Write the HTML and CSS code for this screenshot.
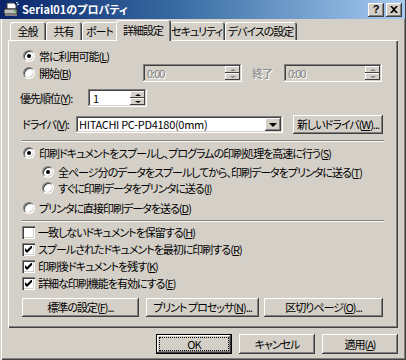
FILE: index.html
```html
<!DOCTYPE html>
<html lang="ja">
<head>
  <meta charset="UTF-8" />
  <title>Serial01のプロパティ</title>
  <link rel="stylesheet" href="styles.css">
</head>
<body>

<div class="window">
  <div class="titlebar">
    <svg class="title-icon" width="16" height="16" viewBox="0 0 16 16">
      <path d="M4 1h7l2 2v4H4z" fill="#fff" stroke="#404040" stroke-width="1"/>
      <path d="M1 7h13v5H1z" fill="#c0c0c0" stroke="#202020" stroke-width="1"/>
      <path d="M2 12h12v2H2z" fill="#808080"/>
      <path d="M11 9h2" stroke="#00a000" stroke-width="1"/>
      <path d="M13 1l2-1M14 3l2-1" stroke="#fff" stroke-width="1"/>
    </svg>
    <span class="title-text">Serial01のプロパティ</span>
    <div class="title-buttons">
      <span class="tbtn help">?</span>
      <span class="tbtn">
        <svg width="8" height="7" viewBox="0 0 8 7"><path d="M0 0h2l2 2 2-2h2L5 3.5 8 7H6L4 5 2 7H0l3-3.5z" fill="#000"/></svg>
      </span>
    </div>
  </div>

  <div class="content">
    <div class="tabs">
      <div class="tab t-general">全般</div>
      <div class="tab t-share">共有</div>
      <div class="tab t-port">ポート</div>
      <div class="tab t-adv selected">詳細設定</div>
      <div class="tab t-sec">セキュリティ</div>
      <div class="tab t-dev">デバイスの設定</div>
    </div>

    <div class="panel">
      <div class="row opt first">
        <span class="radio checked"></span><span>常に利用可能(<u>L</u>)</span>
      </div>

      <div class="row time-row">
        <div class="opt time-opt">
          <span class="radio"></span><span>開始(<u>B</u>)</span>
        </div>
        <div class="field spin disabled t-from">
          <span class="val">0:00</span>
          <span class="spinbtns"><span class="sbtn"><i class="up"></i></span><span class="sbtn"><i class="down"></i></span></span>
        </div>
        <span class="end-label disabled-text">終了</span>
        <div class="field spin disabled t-to">
          <span class="val">0:00</span>
          <span class="spinbtns"><span class="sbtn"><i class="up"></i></span><span class="sbtn"><i class="down"></i></span></span>
        </div>
      </div>

      <div class="row prio-row">
        <span class="prio-label">優先順位(<u>Y</u>):</span>
        <div class="field spin prio">
          <span class="val">1</span>
          <span class="spinbtns"><span class="sbtn"><i class="up"></i></span><span class="sbtn"><i class="down"></i></span></span>
        </div>
      </div>

      <div class="row driver-row">
        <span class="driver-label">ドライバ(<u>V</u>):</span>
        <div class="field select">
          <span class="val">HITACHI PC-PD4180(0mm)</span>
          <span class="dropbtn"><i class="down big"></i></span>
        </div>
        <button class="btn new-driver">新しいドライバ(<u>W</u>)...</button>
      </div>

      <div class="sep first-sep"></div>

      <div class="row opt r-spool">
        <span class="radio checked"></span><span>印刷ドキュメントをスプールし、プログラムの印刷処理を高速に行う(<u>S</u>)</span>
      </div>
      <div class="row opt sub r-all">
        <span class="radio checked"></span><span>全ページ分のデータをスプールしてから、印刷データをプリンタに送る(<u>T</u>)</span>
      </div>
      <div class="row opt sub">
        <span class="radio"></span><span>すぐに印刷データをプリンタに送る(<u>I</u>)</span>
      </div>
      <div class="row opt r-direct">
        <span class="radio"></span><span>プリンタに直接印刷データを送る(<u>D</u>)</span>
      </div>

      <div class="sep second-sep"></div>

      <div class="checks">
        <div class="row chk-row"><span class="checkbox"></span><span>一致しないドキュメントを保留する(<u>H</u>)</span></div>
        <div class="row chk-row"><span class="checkbox checked"><svg width="7" height="7" viewBox="0 0 7 7"><path d="M0 2v3l2 2 5-5V-1L2 4z" fill="#000"/></svg></span><span>スプールされたドキュメントを最初に印刷する(<u>R</u>)</span></div>
        <div class="row chk-row"><span class="checkbox checked"><svg width="7" height="7" viewBox="0 0 7 7"><path d="M0 2v3l2 2 5-5V-1L2 4z" fill="#000"/></svg></span><span>印刷後ドキュメントを残す(<u>K</u>)</span></div>
        <div class="row chk-row"><span class="checkbox checked"><svg width="7" height="7" viewBox="0 0 7 7"><path d="M0 2v3l2 2 5-5V-1L2 4z" fill="#000"/></svg></span><span>詳細な印刷機能を有効にする(<u>E</u>)</span></div>
      </div>

      <div class="row panel-buttons">
        <button class="btn b-defaults">標準の設定(<u>F</u>)...</button>
        <button class="btn b-proc">プリント プロセッサ(<u>N</u>)...</button>
        <button class="btn b-sep">区切りページ(<u>O</u>)...</button>
      </div>
    </div>

    <div class="footer">
      <button class="btn dlg default"><span class="focus">OK</span></button>
      <button class="btn dlg">キャンセル</button>
      <button class="btn dlg">適用(<u>A</u>)</button>
    </div>
  </div>
</div>

</body>
</html>
```

FILE: styles.css
```css
* { box-sizing: border-box; }
body {
  margin: 0;
  background: #d4d0c8;
  font-family: "Noto Sans CJK JP", sans-serif;
  font-size: 11px;
  line-height: 13px;
  color: #000;
  font-feature-settings: "palt";
  white-space: nowrap;
}
u { text-decoration: underline; text-underline-offset: 1px; }

.window {
  width: 406px;
  height: 360px;
  background: #d4d0c8;
  padding: 0 3px 3px 3px;
  display: flex;
  flex-direction: column;
  box-shadow: inset 1px 0 #d4d0c8, inset 2px 0 #fff, inset -1px -1px #404040, inset -2px -2px #808080;
}

/* title bar */
.titlebar {
  height: 19px;
  display: flex;
  align-items: center;
  padding: 0 0 0 1px;
  margin: 0 -2px 0 -3px;
  background: linear-gradient(90deg, #0a246a 0%, #3a6ea5 45%, #a6caf0 100%);
  color: #fff;
  font-weight: bold;
}
.title-icon { margin: 0 3px 0 2px; }
.title-text { flex: 1; }
.title-buttons { display: flex; gap: 2px; margin-right: 3px; }
.tbtn {
  width: 16px;
  height: 14px;
  background: #d4d0c8;
  color: #000;
  font-family: "Liberation Sans", sans-serif;
  font-size: 11px;
  font-weight: bold;
  display: flex;
  align-items: center;
  justify-content: center;
  box-shadow: inset -1px -1px #404040, inset 1px 1px #fff, inset -2px -2px #808080;
}

/* content */
.content {
  flex: 1;
  display: flex;
  flex-direction: column;
  padding: 1px 5px 0 5px;
  letter-spacing: -1px;
}

.tabs {
  display: flex;
  align-items: flex-end;
  height: 20px;
  padding-left: 2px;
  position: relative;
  z-index: 1;
}
.tab {
  height: 18px;
  text-align: center;
  line-height: 18px;
  padding-right: 1px;
  border-radius: 3px 3px 0 0;
  background: #d4d0c8;
  box-shadow: inset 1px 1px #fff, inset -1px 0 #404040, inset -2px 0 #808080;
}
.t-general, .t-share, .t-port { width: 36px; }
.t-adv { width: 51px; }
.t-sec { width: 56px; }
.t-dev { width: 72px; }
.tab.selected {
  height: 21px;
  margin: 0 -2px -1px -2px;
  width: 55px;
  line-height: 20px;
  position: relative;
}

.panel {
  height: 288px;
  padding: 8px 14px 0 14px;
  display: flex;
  flex-direction: column;
  box-shadow: inset 1px 1px #fff, inset -1px -1px #404040, inset -2px -2px #808080;
}

.row { display: flex; align-items: center; }
.opt { height: 16px; gap: 4px; }
.opt.first { margin-left: 1px; }

/* radio and checkbox */
.radio {
  width: 12px;
  height: 12px;
  flex: none;
  border-radius: 50%;
  background: #fff;
  border: 1px solid;
  border-color: #808080 #fff #fff #808080;
  box-shadow: inset 1px 1px #404040, inset -1px -1px #d4d0c8;
  position: relative;
}
.radio.checked::after {
  content: "";
  position: absolute;
  left: 3px;
  top: 3px;
  width: 4px;
  height: 4px;
  border-radius: 50%;
  background: #000;
}
.checkbox {
  width: 13px;
  height: 13px;
  flex: none;
  background: #fff;
  box-shadow: inset 1px 1px #808080, inset 2px 2px #404040, inset -1px -1px #fff, inset -2px -2px #d4d0c8;
  display: flex;
  align-items: center;
  justify-content: center;
}

/* fields */
.field {
  height: 18px;
  background: #fff;
  display: flex;
  align-items: center;
  padding: 2px 2px 2px 4px;
  box-shadow: inset -1px -1px #fff, inset 1px 1px #808080, inset -2px -2px #d4d0c8, inset 2px 2px #404040;
}
.field .val { flex: 1; }
.field.disabled { background: #d4d0c8; }
.disabled .val, .disabled-text { color: #808080; text-shadow: 1px 1px #fff; }

.spinbtns {
  width: 15px;
  height: 100%;
  display: flex;
  flex-direction: column;
}
.sbtn {
  flex: 1;
  display: flex;
  align-items: center;
  justify-content: center;
  background: #d4d0c8;
  box-shadow: inset -1px -1px #404040, inset 1px 1px #fff;
}
i.up, i.down { display: block; width: 0; height: 0; border-left: 3px solid transparent; border-right: 3px solid transparent; }
i.up { border-bottom: 2px solid #000; }
i.down { border-top: 2px solid #000; }
.disabled i.up { border-bottom-color: #808080; }
.disabled i.down { border-top-color: #808080; }
i.down.big { border-left-width: 4px; border-right-width: 4px; border-top-width: 4px; }

.time-row { height: 18px; }
.time-opt { width: 121px; display: flex; align-items: center; gap: 4px; margin-left: 1px; }
.t-from { width: 99px; margin-left: -1px; }
.end-label { width: 22px; margin-left: 10px; }
.t-to { width: 98px; margin-left: 10px; }

.prio-row { height: 18px; margin-top: 7px; }
.prio-label { width: 68px; margin-left: -2px; }
.prio { width: 59px; }
.prio .val { padding-left: 1px; }

.driver-row { height: 19px; margin-top: 8px; }
.driver-label { width: 54px; }
.select { width: 207px; height: 17px; padding-left: 3px; letter-spacing: -0.3px; }
.dropbtn {
  width: 16px;
  height: 100%;
  display: flex;
  align-items: center;
  justify-content: center;
  background: #d4d0c8;
  box-shadow: inset -1px -1px #404040, inset 1px 1px #fff, inset -2px -2px #808080;
}

/* buttons */
.btn {
  font: inherit;
  letter-spacing: inherit;
  font-feature-settings: "palt";
  color: #000;
  background: #d4d0c8;
  border: none;
  padding: 0;
  height: 19px;
  line-height: 13px;
  box-shadow: inset -1px -1px #404040, inset 1px 1px #fff, inset -2px -2px #808080;
  white-space: nowrap;
}
.new-driver { width: 90px; margin-left: 10px; }

.sep {
  height: 2px;
  border-top: 1px solid #808080;
  border-bottom: 1px solid #fff;
}
.first-sep { margin-top: 6px; }
.r-spool { margin-top: 3px; margin-left: 1px; }
.sub { margin-left: 20px; }
.r-all { margin-top: 3px; }
.r-direct { margin-top: 4px; margin-left: 1px; }
.second-sep { margin-top: 4px; }

.checks { margin-top: 2px; display: flex; flex-direction: column; }
.chk-row { height: 17px; gap: 3px; }

.panel-buttons { margin-top: 6px; height: 19px; }
.b-defaults { width: 117px; }
.b-proc { width: 113px; margin-left: 7px; }
.b-sep { width: 119px; margin-left: 5px; }

.footer {
  display: flex;
  justify-content: flex-end;
  gap: 7px;
  margin-top: 6px;
}
.dlg { width: 76px; height: 20px; }
.dlg.default {
  box-shadow: inset 0 0 0 1px #000, inset -2px -2px #404040, inset 2px 2px #fff, inset -3px -3px #808080;
  padding: 4px;
}
.focus {
  display: block;
  height: 12px;
  line-height: 12px;
  outline: 1px dotted #000;
  outline-offset: 0;
}
```
